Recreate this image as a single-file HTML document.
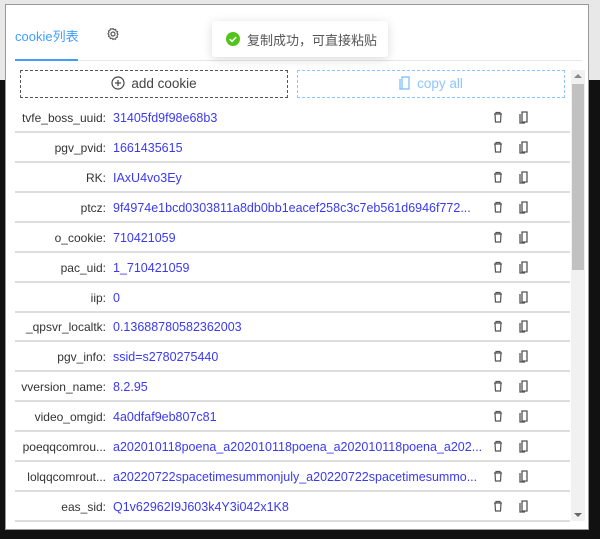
<!DOCTYPE html>
<html><head><meta charset="utf-8"><style>
*{margin:0;padding:0;box-sizing:border-box}
html,body{width:600px;height:539px;overflow:hidden}
body{background:#111;position:relative;font-family:"Liberation Sans","Noto Sans CJK SC",sans-serif;font-size:12px}
.top{position:absolute;left:0;top:0;width:600px;height:80px;background:#e8e8e8}
.win{position:absolute;left:5px;top:4px;width:584px;height:526px;background:#fff;border:1px solid #999}
.tab{position:absolute;left:15px;top:26px;color:#409eff;font-size:13px}
.ul{position:absolute;left:15px;top:59px;width:63px;height:2px;background:#409eff}
.hl{position:absolute;left:15px;top:60px;width:567px;height:1px;background:#e4e7ed}
.toast{position:absolute;left:212px;top:21px;width:176px;height:36px;background:#fff;box-shadow:0 2px 10px rgba(0,0,0,.15);border-radius:3px;font-size:13px;color:#555}
.toast span{position:absolute;left:35px;top:9px}
.btn{position:absolute;top:70px;height:28px;width:268px;border:1px dashed #555;text-align:center;font-size:13.5px;line-height:26px;color:#444}
.row{position:absolute;left:15px;width:555px;height:30px;border-bottom:2px solid #ddd}
.lab{position:absolute;right:464px;top:8px;color:#333;white-space:nowrap;font-size:12px}
.val{position:absolute;left:98px;top:8px;color:#3a3af0;white-space:nowrap;font-size:12.5px}
.sb{position:absolute;left:571px;top:70px;width:14px;height:451px;background:#f1f1f1}
.th{position:absolute;left:1px;top:14px;width:12px;height:186px;background:#c1c1c1}
</style></head><body>
<div class="top"></div>
<div class="win"></div>
<div class="tab">cookie列表</div>
<div class="hl"></div><div class="ul"></div>
<svg width="14" height="14" viewBox="0 0 14 14" style="position:absolute;left:106px;top:27px"><circle cx="7" cy="7" r="2" fill="none" stroke="#555" stroke-width="1.2"/><path d="M7 1.5l1 1.3 1.6-.4.4 1.6 1.5.6-.5 1.5 1 1.2-1 1.2.5 1.5-1.5.6-.4 1.6-1.6-.4L7 12.5l-1-1.3-1.6.4-.4-1.6-1.5-.6.5-1.5-1-1.2 1-1.2-.5-1.5 1.5-.6.4-1.6 1.6.4z" fill="none" stroke="#555" stroke-width="1.1"/></svg>
<div class="toast"><svg width="14" height="14" style="position:absolute;left:14px;top:11px"><circle cx="7" cy="7" r="7" fill="#52c41a"/><path d="M3.8 7.2l2.2 2.2 4.2-4.4" fill="none" stroke="#fff" stroke-width="1.6"/></svg><span>复制成功，可直接粘贴</span></div>
<div class="btn" style="left:20px"><svg width="14" height="14" style="vertical-align:-2px;margin-right:6px"><circle cx="7" cy="7" r="6" fill="none" stroke="#444" stroke-width="1.2"/><path d="M7 4v6M4 7h6" stroke="#444" stroke-width="1.2"/></svg>add cookie</div>
<div class="btn" style="left:297px;border-color:#8cc5ff;color:#8cc5ff"><svg width="12" height="14" style="vertical-align:-2px;margin-right:6px"><path d="M3 1h7v12H3z M1 3v10l2 0" fill="none" stroke="#8cc5ff" stroke-width="1.4"/></svg>copy all</div>
<div class="sb"><div class="th"></div><div style="position:absolute;left:3px;top:4px;border:4px solid transparent;border-bottom:4px solid #888;border-top:0"></div><div style="position:absolute;left:3px;bottom:4px;border:4px solid transparent;border-top:4px solid #666;border-bottom:0"></div></div>
<div style="position:absolute;left:0;top:3px">
<div class="row" style="top:100px"><span class="lab">tvfe_boss_uuid:</span><span class="val">31405fd9f98e68b3</span></div>
<div class="row" style="top:130px"><span class="lab">pgv_pvid:</span><span class="val">1661435615</span></div>
<div class="row" style="top:160px"><span class="lab">RK:</span><span class="val">IAxU4vo3Ey</span></div>
<div class="row" style="top:190px"><span class="lab">ptcz:</span><span class="val">9f4974e1bcd0303811a8db0bb1eacef258c3c7eb561d6946f772...</span></div>
<div class="row" style="top:220px"><span class="lab">o_cookie:</span><span class="val">710421059</span></div>
<div class="row" style="top:250px"><span class="lab">pac_uid:</span><span class="val">1_710421059</span></div>
<div class="row" style="top:280px"><span class="lab">iip:</span><span class="val">0</span></div>
<div class="row" style="top:309px"><span class="lab">_qpsvr_localtk:</span><span class="val">0.13688780582362003</span></div>
<div class="row" style="top:339px"><span class="lab">pgv_info:</span><span class="val">ssid=s2780275440</span></div>
<div class="row" style="top:369px"><span class="lab">vversion_name:</span><span class="val">8.2.95</span></div>
<div class="row" style="top:399px"><span class="lab">video_omgid:</span><span class="val">4a0dfaf9eb807c81</span></div>
<div class="row" style="top:429px"><span class="lab">poeqqcomrou...</span><span class="val">a202010118poena_a202010118poena_a202010118poena_a202...</span></div>
<div class="row" style="top:459px"><span class="lab">lolqqcomrout...</span><span class="val">a20220722spacetimesummonjuly_a20220722spacetimesummo...</span></div>
<div class="row" style="top:489px"><span class="lab">eas_sid:</span><span class="val">Q1v62962I9J603k4Y3i042x1K8</span></div>
</div>
<svg width="600" height="530" style="position:absolute;left:0;top:3px">
<defs><g id="t"><path d="M-4 -3h8M-2 -3v-1.5h4v1.5M-3 -3l.5 8h5l.5-8" fill="none" stroke="#555" stroke-width="1.2"/></g>
<g id="c"><path d="M-2 -5h5v10h-5z M-4 -3v9h5" fill="none" stroke="#555" stroke-width="1.3"/></g></defs>
<use href="#t" x="498" y="114"/><use href="#c" x="524" y="114"/>
<use href="#t" x="498" y="144"/><use href="#c" x="524" y="144"/>
<use href="#t" x="498" y="174"/><use href="#c" x="524" y="174"/>
<use href="#t" x="498" y="204"/><use href="#c" x="524" y="204"/>
<use href="#t" x="498" y="234"/><use href="#c" x="524" y="234"/>
<use href="#t" x="498" y="264"/><use href="#c" x="524" y="264"/>
<use href="#t" x="498" y="294"/><use href="#c" x="524" y="294"/>
<use href="#t" x="498" y="323"/><use href="#c" x="524" y="323"/>
<use href="#t" x="498" y="353"/><use href="#c" x="524" y="353"/>
<use href="#t" x="498" y="383"/><use href="#c" x="524" y="383"/>
<use href="#t" x="498" y="413"/><use href="#c" x="524" y="413"/>
<use href="#t" x="498" y="443"/><use href="#c" x="524" y="443"/>
<use href="#t" x="498" y="473"/><use href="#c" x="524" y="473"/>
<use href="#t" x="498" y="503"/><use href="#c" x="524" y="503"/>
</svg>
</body></html>
